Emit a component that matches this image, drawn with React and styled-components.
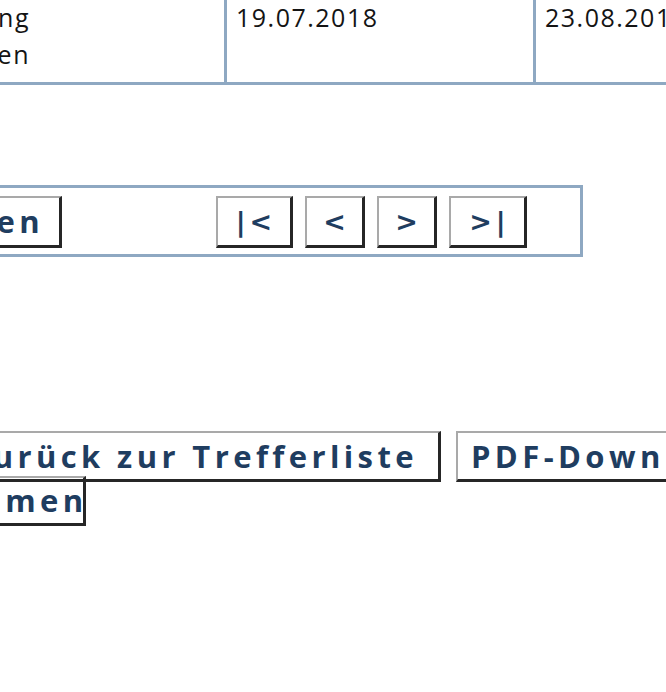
import React from 'react';
import styled, { createGlobalStyle } from 'styled-components';

const GlobalStyle = createGlobalStyle`
  *, *::before, *::after { box-sizing: border-box; }
  html { overflow: hidden; background: #ffffff; }
  body { margin: 0; padding: 0; font-family: "Open Sans", "Liberation Sans", sans-serif; color: #141414; }
`;

const Page = styled.div`
  width: 1100px;
  margin-left: -200px;
  padding-bottom: 40px;
`;

const DataRow = styled.div`
  display: grid;
  grid-template-columns: 427px 309px 1fr;
  border-bottom: 3px solid #8ea8c2;
  margin-top: -14px;
`;

const Cell = styled.div`
  padding: 13px 7px 9px 9px;
  font-size: 25px;
  line-height: 37px;
  letter-spacing: 1.5px;
  border-right: ${(p) => (p.$last ? 'none' : '3px solid #8ea8c2')};
  white-space: nowrap;
`;

const Lines = styled.div`
  width: 221px;
  text-align: right;
`;

const Pager = styled.div`
  display: grid;
  grid-template-columns: 239px 1fr auto;
  align-items: center;
  width: 763px;
  margin: 100px 0 0 20px;
  padding: 8px 53px 6px 0;
  border: 3px solid #8ea8c2;
`;

const PagerLeft = styled.div`
  display: flex;
  justify-content: flex-end;
`;

const PagerNav = styled.div`
  display: flex;
  gap: 12px;
`;

const Btn = styled.button`
  font-family: "Open Sans", "Liberation Sans", sans-serif;
  font-weight: bold;
  font-size: 31px;
  letter-spacing: 4.4px;
  color: #1f3d60;
  background: transparent;
  border-style: solid;
  border-width: 2px 3px 3px 2px;
  border-color: #a9a9a9 #262626 #262626 #a9a9a9;
  border-radius: 0;
  height: ${(p) => p.$h || 52}px;
  width: ${(p) => (p.$w ? `${p.$w}px` : 'auto')};
  padding: 0 ${(p) => p.$pr ?? 14}px 0 ${(p) => p.$pl ?? 14}px;
  line-height: 1;
  white-space: nowrap;
  text-align: ${(p) => p.$align || 'center'};
  cursor: pointer;
`;

const NavBtn = styled(Btn)`
  font-family: "DejaVu Sans", Verdana, sans-serif;
  font-size: 27px;
  letter-spacing: 4px;
  padding: 0 0 0 4px;
`;

const Actions = styled.div`
  display: flex;
  flex-wrap: wrap;
  column-gap: 15px;
  width: 1000px;
  margin: 174px 0 0 50px;

  & > button {
    margin-bottom: -6px;
  }
`;

export default function App() {
  return (
    <>
      <GlobalStyle />
      <Page>
        <DataRow>
          <Cell>
            <Lines>
              Eintragung
              <br />
              Bekanntmachen
            </Lines>
          </Cell>
          <Cell>19.07.2018</Cell>
          <Cell $last>23.08.2018</Cell>
        </DataRow>

        <Pager>
          <PagerLeft>
            <Btn $pr={15}>Dokumente anzeigen</Btn>
          </PagerLeft>
          <span />
          <PagerNav>
            <NavBtn $w={77}>|&lt;</NavBtn>
            <NavBtn $w={60}>&lt;</NavBtn>
            <NavBtn $w={60}>&gt;</NavBtn>
            <NavBtn $w={78}>&gt;|</NavBtn>
          </PagerNav>
        </Pager>

        <Actions>
          <Btn $h={51} $w={591} $align="right" $pr={20}>Zurück zur Trefferliste</Btn>
          <Btn $h={51} $pl={13}>PDF-Download</Btn>
          <Btn $h={50} $w={236} $align="right" $pr={8}>Aufnehmen</Btn>
        </Actions>
      </Page>
    </>
  );
}
